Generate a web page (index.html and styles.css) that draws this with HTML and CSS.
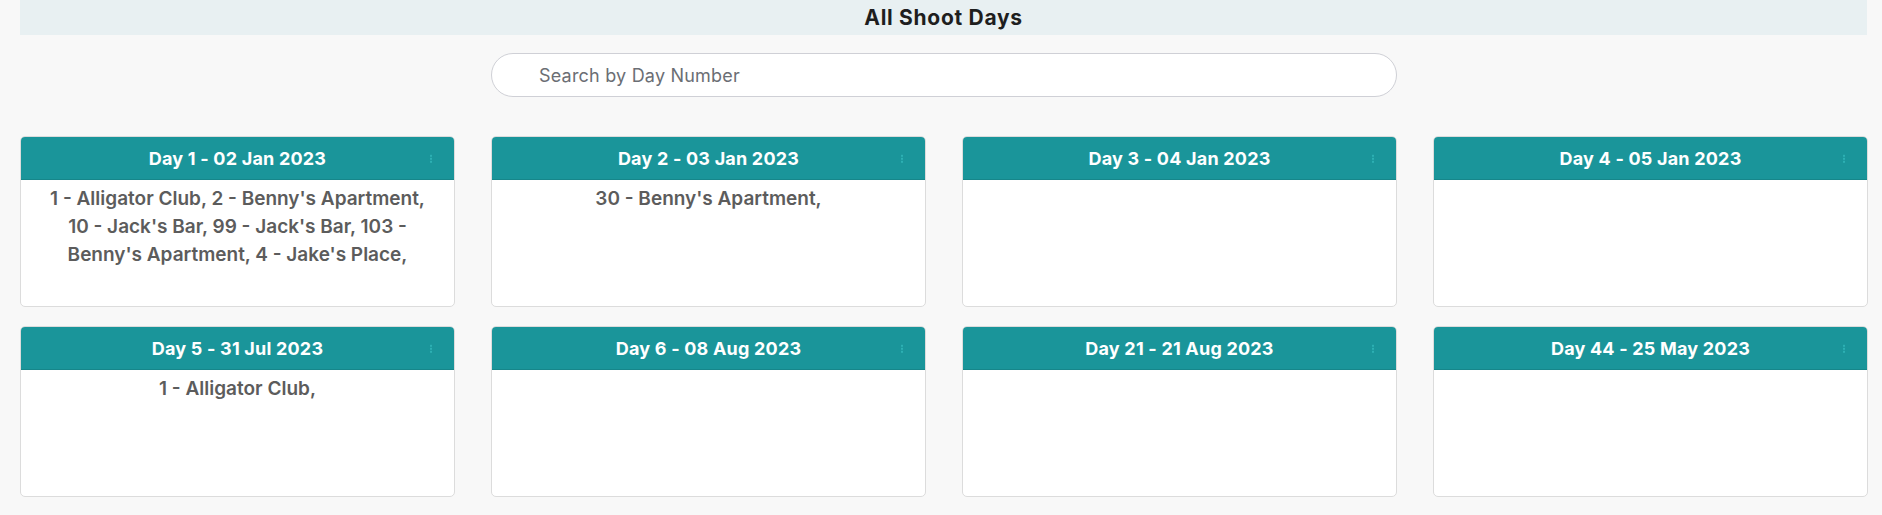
FILE: index.html
```html
<!DOCTYPE html>
<html>
<head>
<meta charset="utf-8">
<link rel="stylesheet" href="styles.css">
</head>
<body>
<div class="page">
  <div class="title-bar">All Shoot Days</div>
  <div class="search-row">
    <input class="search" type="text" placeholder="Search by Day Number">
  </div>
  <div class="grid">
    <div class="card">
      <div class="card-head"><span class="card-title">Day 1 - 02 Jan 2023</span><span class="kebab"><i></i><i></i><i></i></span></div>
      <div class="card-body">1 - Alligator Club, 2 - Benny's Apartment, 10 - Jack's Bar, 99 - Jack's Bar, 103 - Benny's Apartment, 4 - Jake's Place,</div>
    </div>
    <div class="card">
      <div class="card-head"><span class="card-title">Day 2 - 03 Jan 2023</span><span class="kebab"><i></i><i></i><i></i></span></div>
      <div class="card-body">30 - Benny's Apartment,</div>
    </div>
    <div class="card">
      <div class="card-head"><span class="card-title">Day 3 - 04 Jan 2023</span><span class="kebab"><i></i><i></i><i></i></span></div>
      <div class="card-body"></div>
    </div>
    <div class="card">
      <div class="card-head"><span class="card-title">Day 4 - 05 Jan 2023</span><span class="kebab"><i></i><i></i><i></i></span></div>
      <div class="card-body"></div>
    </div>
    <div class="card">
      <div class="card-head"><span class="card-title">Day 5 - 31 Jul 2023</span><span class="kebab"><i></i><i></i><i></i></span></div>
      <div class="card-body">1 - Alligator Club,</div>
    </div>
    <div class="card">
      <div class="card-head"><span class="card-title">Day 6 - 08 Aug 2023</span><span class="kebab"><i></i><i></i><i></i></span></div>
      <div class="card-body"></div>
    </div>
    <div class="card">
      <div class="card-head"><span class="card-title">Day 21 - 21 Aug 2023</span><span class="kebab"><i></i><i></i><i></i></span></div>
      <div class="card-body"></div>
    </div>
    <div class="card">
      <div class="card-head"><span class="card-title">Day 44 - 25 May 2023</span><span class="kebab"><i></i><i></i><i></i></span></div>
      <div class="card-body"></div>
    </div>
  </div>
</div>
</body>
</html>
```

FILE: styles.css
```css
* { box-sizing: border-box; }
html, body { margin: 0; padding: 0; }
body {
  background: #f8f8f8;
  font-family: "Inter", "Noto Sans", sans-serif;
  width: 1882px;
  height: 515px;
  overflow: hidden;
}
.page {
  padding: 0 14px 0 20px;
}
.title-bar {
  height: 35px;
  background: #e8f0f2;
  color: #1e1e1e;
  font-size: 21px;
  font-weight: 700;
  letter-spacing: 0.7px;
  display: flex;
  align-items: center;
  justify-content: center;
  margin-right: 1px;
}
.search-row {
  display: flex;
  justify-content: center;
  padding-top: 18px;
}
.search {
  width: 906px;
  height: 44px;
  border: 1px solid #cfd0d6;
  border-radius: 22px;
  background: #fff;
  padding: 0 0 0 47px;
  font-family: inherit;
  font-size: 18px;
  letter-spacing: 0.2px;
  color: #333;
  outline: none;
}
.search::placeholder { color: #6b6e74; }
.grid {
  margin-top: 39px;
  display: grid;
  grid-template-columns: repeat(4, 435px);
  column-gap: 36px;
  row-gap: 19px;
}
.card {
  height: 171px;
  background: #fff;
  border: 1px solid #dcdcdc;
  border-radius: 5px;
  overflow: hidden;
  display: flex;
  flex-direction: column;
}
.card-head {
  height: 43px;
  flex: none;
  background: #1a959a;
  border-bottom: 1px solid #16868a;
  position: relative;
  display: flex;
  align-items: center;
  justify-content: center;
}
.card-title {
  color: #fff;
  font-size: 18px;
  font-weight: 700;
  letter-spacing: 0.2px;
}
.kebab {
  position: absolute;
  right: 22px;
  top: 50%;
  transform: translateY(-40%);
  display: flex;
  flex-direction: column;
  gap: 1px;
}
.kebab i {
  display: block;
  width: 2px;
  height: 2px;
  background: #2db0b3;
}
.card-body {
  padding: 5px 18px 0;
  text-align: center;
  color: #5c5c5c;
  font-size: 19px;
  font-weight: 600;
  line-height: 28px;
}
```
